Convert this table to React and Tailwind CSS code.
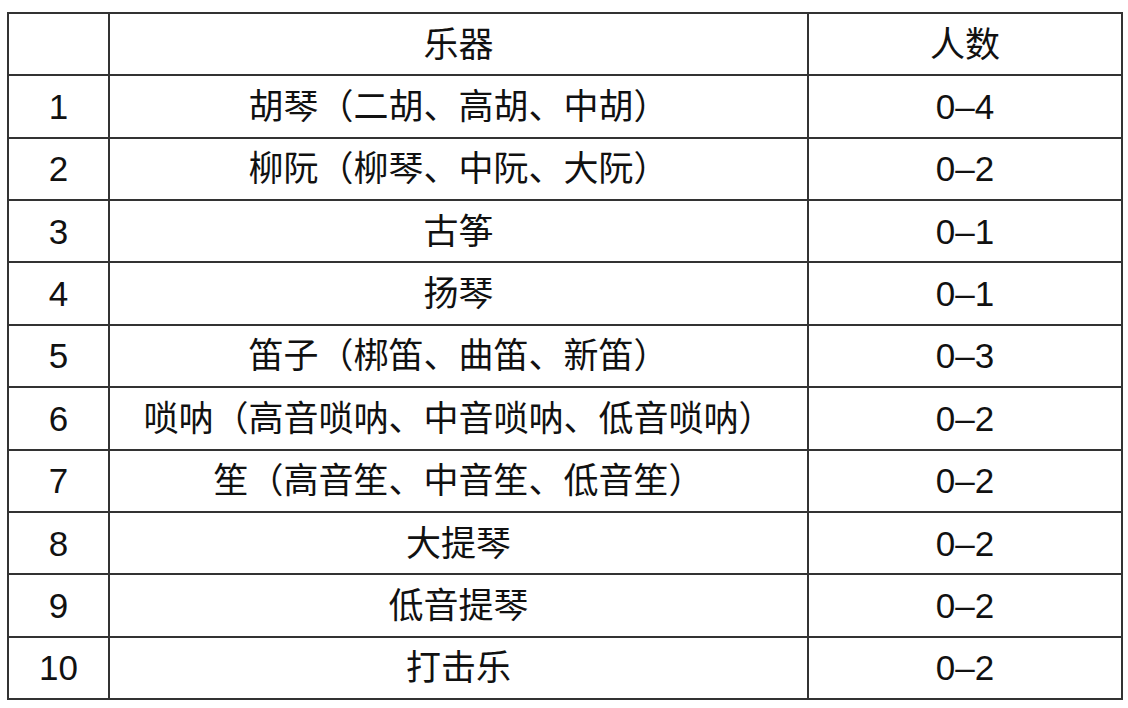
import React from 'react';

const rows = [
  ['1', '胡琴（二胡、高胡、中胡）', '0–4'],
  ['2', '柳阮（柳琴、中阮、大阮）', '0–2'],
  ['3', '古筝', '0–1'],
  ['4', '扬琴', '0–1'],
  ['5', '笛子（梆笛、曲笛、新笛）', '0–3'],
  ['6', '唢呐（高音唢呐、中音唢呐、低音唢呐）', '0–2'],
  ['7', '笙（高音笙、中音笙、低音笙）', '0–2'],
  ['8', '大提琴', '0–2'],
  ['9', '低音提琴', '0–2'],
  ['10', '打击乐', '0–2'],
];

export default function App() {
  const cell = 'border-2 border-[#333] text-center align-middle p-0 whitespace-nowrap';
  return (
    <div
      lang="zh-CN"
      className="w-[1128px] h-[708px] bg-white pt-[12px] pl-[7px] font-['Liberation_Sans','Noto_Sans_CJK_SC',sans-serif] text-[35px] leading-none text-[#111]"
    >
      <table className="table-fixed border-collapse w-[1114px] h-[688px]">
        <colgroup>
          <col className="w-[101px]" />
          <col className="w-[699px]" />
          <col className="w-[314px]" />
        </colgroup>
        <tbody>
          <tr className="h-[62px]">
            <td className={cell}></td>
            <td className={cell}>乐器</td>
            <td className={cell}>人数</td>
          </tr>
          {rows.map(([n, name, count]) => (
            <tr key={n} className="h-[62px]">
              <td className={cell}>{n}</td>
              <td className={cell}>{name}</td>
              <td className={cell}>{count}</td>
            </tr>
          ))}
        </tbody>
      </table>
    </div>
  );
}
